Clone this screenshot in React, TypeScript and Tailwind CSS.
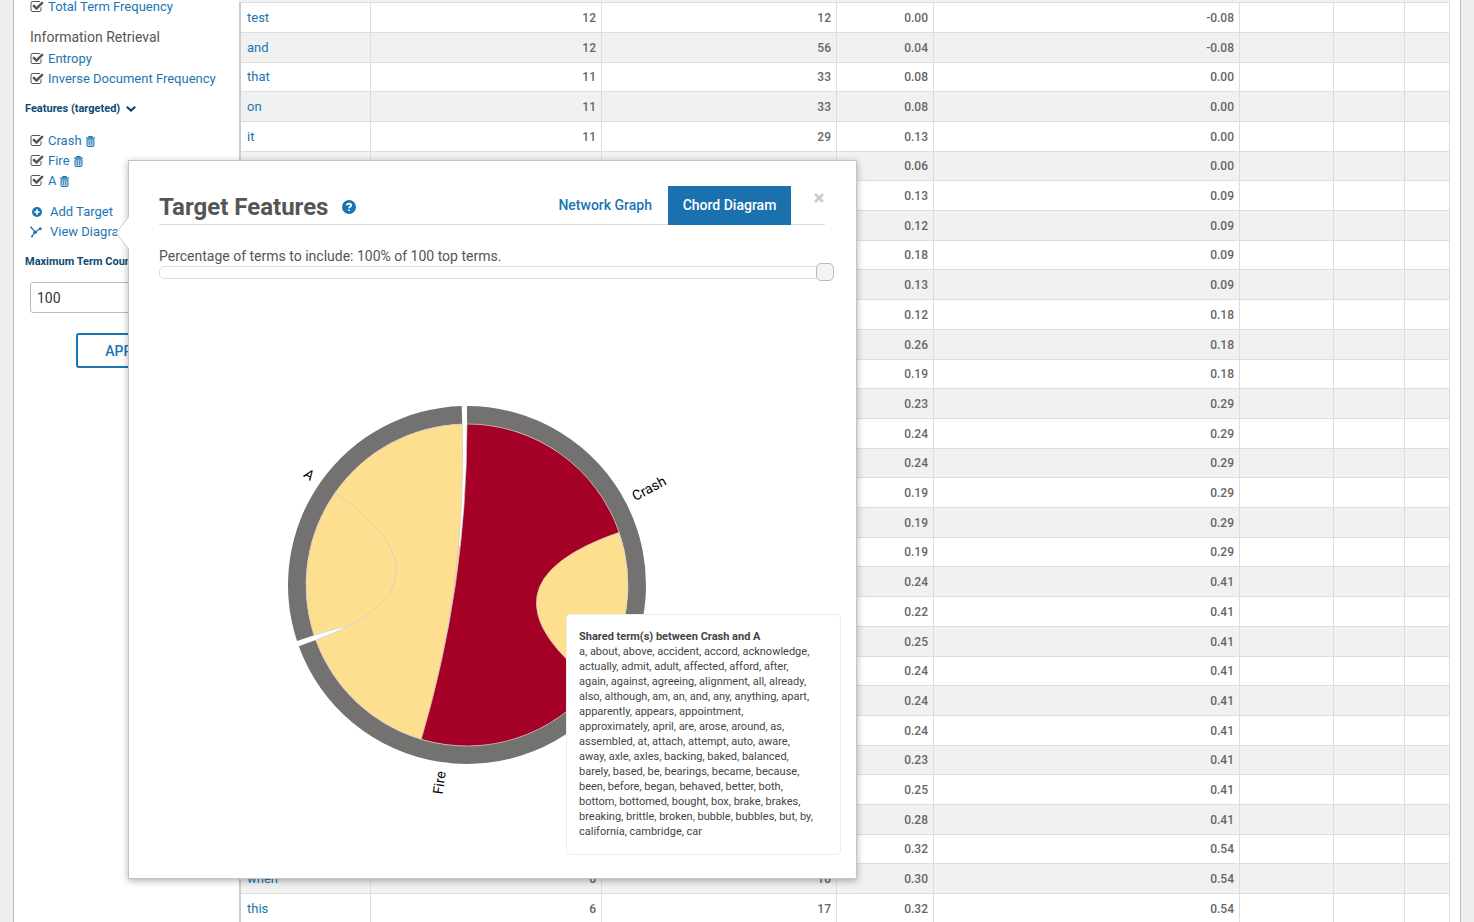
import { useState } from "react";

type Row = [string, string, string, string, string];

const rows: Row[] = [
  ["test", "12", "12", "0.00", "-0.08"],
  ["and", "12", "56", "0.04", "-0.08"],
  ["that", "11", "33", "0.08", "0.00"],
  ["on", "11", "33", "0.08", "0.00"],
  ["it", "11", "29", "0.13", "0.00"],
  ["", "", "", "0.06", "0.00"],
  ["", "", "", "0.13", "0.09"],
  ["", "", "", "0.12", "0.09"],
  ["", "", "", "0.18", "0.09"],
  ["", "", "", "0.13", "0.09"],
  ["", "", "", "0.12", "0.18"],
  ["", "", "", "0.26", "0.18"],
  ["", "", "", "0.19", "0.18"],
  ["", "", "", "0.23", "0.29"],
  ["", "", "", "0.24", "0.29"],
  ["", "", "", "0.24", "0.29"],
  ["", "", "", "0.19", "0.29"],
  ["", "", "", "0.19", "0.29"],
  ["", "", "", "0.19", "0.29"],
  ["", "", "", "0.24", "0.41"],
  ["", "", "", "0.22", "0.41"],
  ["", "", "", "0.25", "0.41"],
  ["", "", "", "0.24", "0.41"],
  ["", "", "", "0.24", "0.41"],
  ["", "", "", "0.24", "0.41"],
  ["", "", "", "0.23", "0.41"],
  ["", "", "", "0.25", "0.41"],
  ["", "", "", "0.28", "0.41"],
  ["", "", "", "0.32", "0.54"],
  ["when", "6", "10", "0.30", "0.54"],
  ["this", "6", "17", "0.32", "0.54"],
];

const terms =
  "a, about, above, accident, accord, acknowledge, actually, admit, adult, affected, afford, after, again, against, agreeing, alignment, all, already, also, although, am, an, and, any, anything, apart, apparently, appears, appointment, approximately, april, are, arose, around, as, assembled, at, attach, attempt, auto, aware, away, axle, axles, backing, baked, balanced, barely, based, be, bearings, became, because, been, before, began, behaved, better, both, bottom, bottomed, bought, box, brake, brakes, breaking, brittle, broken, bubble, bubbles, but, by, california, cambridge, car";

/* Chord diagram geometry: angles are in degrees, clockwise from the top. */
const OUTER = 179;
const INNER = 161;

function at(deg: number, r: number): string {
  const a = (deg * Math.PI) / 180;
  return `${(r * Math.sin(a)).toFixed(2)} ${(-r * Math.cos(a)).toFixed(2)}`;
}

function ring(a0: number, a1: number): string {
  return `M${at(a0, OUTER)}A${OUTER} ${OUTER} 0 0 1 ${at(a1, OUTER)}L${at(a1, INNER)}A${INNER} ${INNER} 0 0 0 ${at(a0, INNER)}Z`;
}

function ribbon(a0: number, a1: number, b0: number, b1: number): string {
  return `M${at(a0, INNER)}A${INNER} ${INNER} 0 0 1 ${at(a1, INNER)}Q0 0 ${at(b0, INNER)}A${INNER} ${INNER} 0 0 1 ${at(b1, INNER)}Q0 0 ${at(a0, INNER)}Z`;
}

function ChordDiagram() {
  return (
    <svg
      viewBox="-240 -240 480 480"
      className="h-[480px] w-[480px]"
      role="img"
      aria-label="Chord diagram of Crash, Fire and A"
    >
      <g fill="#737270">
        <path d={ring(0, 126)} />
        <path d={ring(127.7, 250)} />
        <path d={ring(251.8, 358.3)} />
      </g>
      <g stroke="#cccccc" strokeOpacity="0.7" strokeWidth="1">
        <path fill="#fedf90" d={ribbon(70.9, 126, 251.8, 305)} />
        <path fill="#fedf90" d={ribbon(196.5, 250, 305, 358.3)} />
        <path fill="#a50026" d={ribbon(0, 70.9, 127.7, 196.5)} />
      </g>
      <g fontSize="14" fill="#000000">
        <text transform="rotate(-28) translate(188)" dy="5">
          Crash
        </text>
        <text transform="rotate(98) translate(188) rotate(180)" dy="5" textAnchor="end">
          Fire
        </text>
        <text transform="rotate(215) translate(188) rotate(180)" dy="5" textAnchor="end">
          A
        </text>
      </g>
    </svg>
  );
}

function CheckIcon() {
  return (
    <svg viewBox="0 0 1792 1792" className="size-[14px] fill-[#555]" aria-hidden="true">
      <path d="M1472 930v318q0 119-84.5 203.5t-203.5 84.5h-832q-119 0-203.5-84.5t-84.5-203.5v-832q0-119 84.5-203.5t203.5-84.5h832q63 0 117 25 15 7 18 23 3 17-9 29l-49 49q-10 10-23 10-3 0-9-2-23-6-45-6h-832q-66 0-113 47t-47 113v832q0 66 47 113t113 47h832q66 0 113-47t47-113v-254q0-13 9-22l64-64q10-10 23-10 6 0 12 3 20 8 20 29zm231-489l-814 814q-24 24-57 24t-57-24l-430-430q-24-24-24-57t24-57l110-110q24-24 57-24t57 24l263 263 647-647q24-24 57-24t57 24l110 110q24 24 24 57t-24 57z" />
    </svg>
  );
}

function TrashIcon() {
  return (
    <svg viewBox="0 0 9 11" className="h-[11px] w-[9px]" fill="none" stroke="#1b75b3" aria-hidden="true">
      <path d="M0 2.2h9M3 2V0.7h3V2" strokeWidth="1.3" />
      <path d="M1 3.8v5.7q0 1 1 1h5q1 0 1-1V3.8z" fill="#1b75b3" fillOpacity="0.3" strokeWidth="1" />
      <path d="M3.3 4.8v4.4M5.7 4.8v4.4" strokeWidth="0.9" />
    </svg>
  );
}

function Check({
  label,
  size = "h-5",
  removable = false,
}: {
  label: string;
  size?: string;
  removable?: boolean;
}) {
  return (
    <div className={`flex items-center gap-1 pl-4 ${size}`}>
      <label className="flex items-center gap-1">
        <input type="checkbox" defaultChecked className="sr-only" />
        <CheckIcon />
        <span>{label}</span>
      </label>
      {removable && (
        <button type="button" aria-label={`Remove ${label}`}>
          <TrashIcon />
        </button>
      )}
    </div>
  );
}

function Sidebar() {
  return (
    <aside className="w-[225px] shrink-0 text-[13px] leading-5 whitespace-nowrap text-[#1b75b3]">
      <Check label="Total Term Frequency" size="h-[14px] leading-[14px]" />
      <h3 className="mt-[13px] pl-4 text-[14px] text-[#555]">Information Retrieval</h3>
      <div className="mt-[2px]">
        <Check label="Entropy" />
        <Check label="Inverse Document Frequency" />
      </div>
      <h2 className="mt-[10px] flex items-center gap-[6px] pl-[11px] text-[11px] leading-5 font-bold text-[#0e4a6e]">
        Features (targeted)
        <svg viewBox="0 0 10 6" className="h-[6px] w-[10px]" fill="none" stroke="#0e4a6e" strokeWidth="2.2" aria-hidden="true">
          <path d="M0.8 0.8L5 4.6L9.2 0.8" />
        </svg>
      </h2>
      <div className="mt-3">
        <Check label="Crash" removable />
        <Check label="Fire" removable />
        <Check label="A" removable />
      </div>
      <a href="#add" className="mt-[11px] flex h-5 items-center gap-2 pl-[18px]">
        <svg viewBox="0 0 12 12" className="size-[10px]" aria-hidden="true">
          <circle cx="6" cy="6" r="6" fill="#1b75b3" />
          <path d="M6 2.8v6.4M2.8 6h6.4" stroke="#fff" strokeWidth="2" />
        </svg>
        Add Target
      </a>
      <a href="#view" className="flex h-5 items-center gap-2 pl-4">
        <svg viewBox="0 0 12 12" className="size-[12px]" fill="#1b75b3" stroke="#1b75b3" aria-hidden="true">
          <path d="M1.2 1.4L5 6.2L9.8 3M5 6.2L2 10.4" fill="none" strokeWidth="1.2" />
          <circle cx="5.2" cy="6.2" r="1.8" stroke="none" />
          <circle cx="1.2" cy="1.6" r="1" stroke="none" />
          <circle cx="10.2" cy="2.8" r="1.5" stroke="none" />
          <circle cx="2" cy="10.4" r="1" stroke="none" />
        </svg>
        View Diagram
      </a>
      <label htmlFor="max-terms" className="mt-[10px] block pl-[11px] text-[11px] leading-5 font-bold text-[#0e4a6e]">
        Maximum Term Count
      </label>
      <input
        id="max-terms"
        type="text"
        defaultValue="100"
        className="mt-[10px] ml-4 h-[31px] w-[190px] rounded-[3px] border border-[#bbb] bg-white px-[6px] text-[14px] text-[#333]"
      />
      <button
        type="button"
        className="mt-5 ml-[62px] block h-[35px] w-[100px] rounded-[3px] border-2 border-[#1b75b3] text-[14px] font-medium"
      >
        APPLY
      </button>
    </aside>
  );
}

const cell = "truncate border-r border-b border-[#ddd] px-[5px] text-right font-medium";

function TermTable() {
  return (
    <table className="w-full table-fixed border-separate border-spacing-0 border-l-2 border-[#ccc] text-[12px] leading-4 text-[#666]">
      <colgroup>
        <col className="w-[130px]" />
        <col className="w-[231px]" />
        <col className="w-[235px]" />
        <col className="w-[97px]" />
        <col className="w-[306px]" />
        <col className="w-[94px]" />
        <col className="w-[71px]" />
        <col className="w-[45px]" />
      </colgroup>
      <tbody>
        {rows.map(([term, docs, total, x, y], i) => (
          <tr
            key={i}
            className="h-[30px] odd:bg-white even:bg-[#f1f1f1] nth-[10n+3]:h-[29px] nth-[10n+6]:h-[29px] nth-[10n+9]:h-[29px]"
          >
            <td className="truncate border-r border-b border-[#ddd] px-[6px] text-[13px]">
              <a href={`#${term}`} className="text-[#1b75b3]">
                {term}
              </a>
            </td>
            <td className={cell}>{docs}</td>
            <td className={cell}>{total}</td>
            <td className={cell}>{x}</td>
            <td className={cell}>{y}</td>
            <td className={cell} />
            <td className={cell} />
            <td className={cell} />
          </tr>
        ))}
      </tbody>
    </table>
  );
}

function Dialog() {
  const [percent, setPercent] = useState(100);
  return (
    <section
      role="dialog"
      aria-labelledby="dialog-title"
      className="absolute top-40 left-32 h-[719px] w-[729px] border border-[#c4c4c4] bg-white pt-[25px] pr-[31px] pl-[30px] shadow-[0_2px_7px_rgba(0,0,0,0.3)]"
    >
      <svg viewBox="0 0 14 34" className="absolute top-[55px] -left-[14px] h-[34px] w-[14px]" aria-hidden="true">
        <path d="M14 0.5L1 17L14 33.5Z" fill="#fff" />
        <path d="M13.5 1L1 17L13.5 33" fill="none" stroke="#ccc" />
      </svg>
      <header className="flex h-[39px] border-b border-[#ddd]">
        <h1 id="dialog-title" className="pt-[3px] text-[24px] leading-9 font-bold text-[#555]">
          Target Features
        </h1>
        <button type="button" aria-label="Help" className="ml-[14px] h-[42px]">
          <svg viewBox="0 0 14 14" className="size-[14px]" aria-hidden="true">
            <circle cx="7" cy="7" r="7" fill="#1b75b3" />
            <path d="M4.8 5.4Q5 3.6 7.1 3.6Q9.3 3.7 9.2 5.3Q9.1 6.2 7.9 6.9Q7.1 7.4 7.1 8.3M7.1 9.5v1.6" fill="none" stroke="#fff" strokeWidth="1.8" />
          </svg>
        </button>
        <nav className="ml-auto flex text-[14px] font-medium">
          <button type="button" className="h-[39px] px-4 text-[#1b75b3]">
            Network Graph
          </button>
          <button type="button" className="h-[39px] w-[123px] bg-[#1b70ae] text-white">
            Chord Diagram
          </button>
        </nav>
        <button type="button" aria-label="Close" className="mt-[7px] ml-[23px] h-[10px] w-[11px]">
          <svg viewBox="0 0 10 10" className="size-[10px]" aria-hidden="true">
            <path d="M1 1L9 9M9 1L1 9" stroke="#ccc" strokeWidth="2.8" />
          </svg>
        </button>
      </header>
      <label htmlFor="percent" className="mt-[21px] block text-[14px] leading-5 text-[#555]">
        Percentage of terms to include: {percent}% of 100 top terms.
      </label>
      <div className="relative h-[13px] rounded-[5px] border border-[#ddd]">
        <input
          id="percent"
          type="range"
          value={percent}
          onChange={(e) => setPercent(Number(e.target.value))}
          className="absolute -top-[5px] -left-2 h-[19px] w-[calc(100%+18px)] appearance-none bg-transparent [&::-webkit-slider-thumb]:size-[18px] [&::-webkit-slider-thumb]:appearance-none [&::-webkit-slider-thumb]:rounded-[5px] [&::-webkit-slider-thumb]:border [&::-webkit-slider-thumb]:border-[#bbb] [&::-webkit-slider-thumb]:bg-[#f3f3f3]"
        />
      </div>
      <div className="mt-[66px] pl-[68px]">
        <ChordDiagram />
      </div>
      <div
        role="tooltip"
        className="absolute right-[15px] bottom-[23px] w-[275px] rounded-[4px] border border-[#eee] bg-white pt-[14px] pr-6 pb-[15px] pl-3 text-[11px] leading-[15px] text-[#444]"
      >
        <strong className="block font-bold">Shared term(s) between Crash and A</strong>
        {terms}
      </div>
    </section>
  );
}

export default function App() {
  return (
    <div className="relative h-screen overflow-hidden bg-[#eee] px-[13px] font-[Roboto,sans-serif]">
      <main className="flex min-h-full border-x border-[#bbb] bg-white pr-[10px]">
        <Sidebar />
        <div className="min-w-0 flex-1">
          <div className="h-[3px] border-b border-[#ddd] bg-[#f1f1f1]" />
          <TermTable />
        </div>
      </main>
      <Dialog />
    </div>
  );
}
